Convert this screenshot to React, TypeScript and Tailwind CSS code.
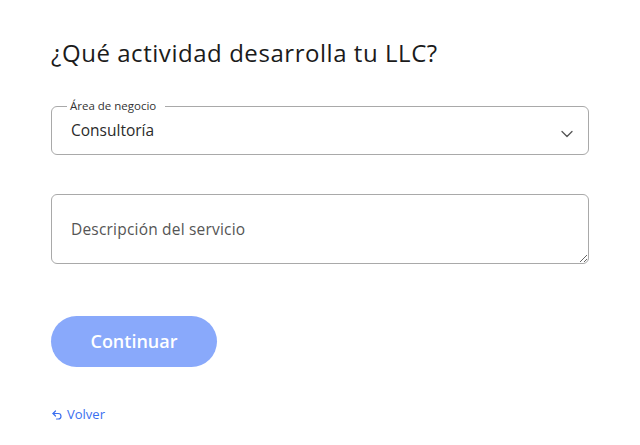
import { useState } from 'react'

export default function App() {
  const [area, setArea] = useState('Consultoría')
  const [desc, setDesc] = useState('')

  return (
    <main className="min-h-[445px] bg-white px-[51px] pt-[38px] font-['Open_Sans','Noto_Sans',sans-serif] text-[#1b1b1b]">
      <h1 className="text-[24px] leading-[30px] font-medium tracking-[0.55px]">¿Qué actividad desarrolla tu LLC?</h1>

      <fieldset className="relative mt-[32px] h-[55px] w-[538px] rounded-[6px] border border-[#a9a9a9] px-[8px]">
        <legend className="ml-[7px] pl-[3px] pr-[9px] text-[11.5px] leading-[12px] text-[#333]">Área de negocio</legend>
        <select
          className="absolute inset-0 h-full w-full cursor-pointer appearance-none bg-transparent pb-[4px] pl-[19px] text-[15.5px] text-[#2a2a2a] outline-none"
          value={area}
          onChange={(e) => setArea(e.target.value)}
        >
          <option>Consultoría</option>
          <option>Tecnología</option>
          <option>Comercio</option>
        </select>
        <svg className="pointer-events-none absolute right-[15px] top-[18px]" width="12" height="8" viewBox="0 0 12 8" fill="none">
          <path d="M1 1.5l5 5 5-5" stroke="#555" strokeWidth="1.3" strokeLinecap="round" strokeLinejoin="round" />
        </svg>
      </fieldset>

      <textarea
        className="mt-[39px] block h-[70px] w-[538px] resize-y rounded-[6px] border border-[#a9a9a9] px-[19px] pt-[23px] text-[15.5px] tracking-[0.2px] text-[#2a2a2a] outline-none placeholder:text-[#555]"
        placeholder="Descripción del servicio"
        value={desc}
        onChange={(e) => setDesc(e.target.value)}
      />

      <button className="mt-[52px] flex h-[51px] w-[166px] items-center justify-center rounded-full bg-[#89a9fb] text-[18px] font-semibold text-white">
        Continuar
      </button>

      <a href="#" className="mt-[38px] flex items-center gap-[4px] text-[13px] text-[#3b6ff0]">
        <svg width="12" height="12" viewBox="0 0 24 24" fill="none" stroke="currentColor" strokeWidth="2.4" strokeLinecap="round" strokeLinejoin="round">
          <path d="M9 14 4 9l5-5" />
          <path d="M4 9h10.5a5.5 5.5 0 0 1 0 11H11" />
        </svg>
        Volver
      </a>
    </main>
  )
}
